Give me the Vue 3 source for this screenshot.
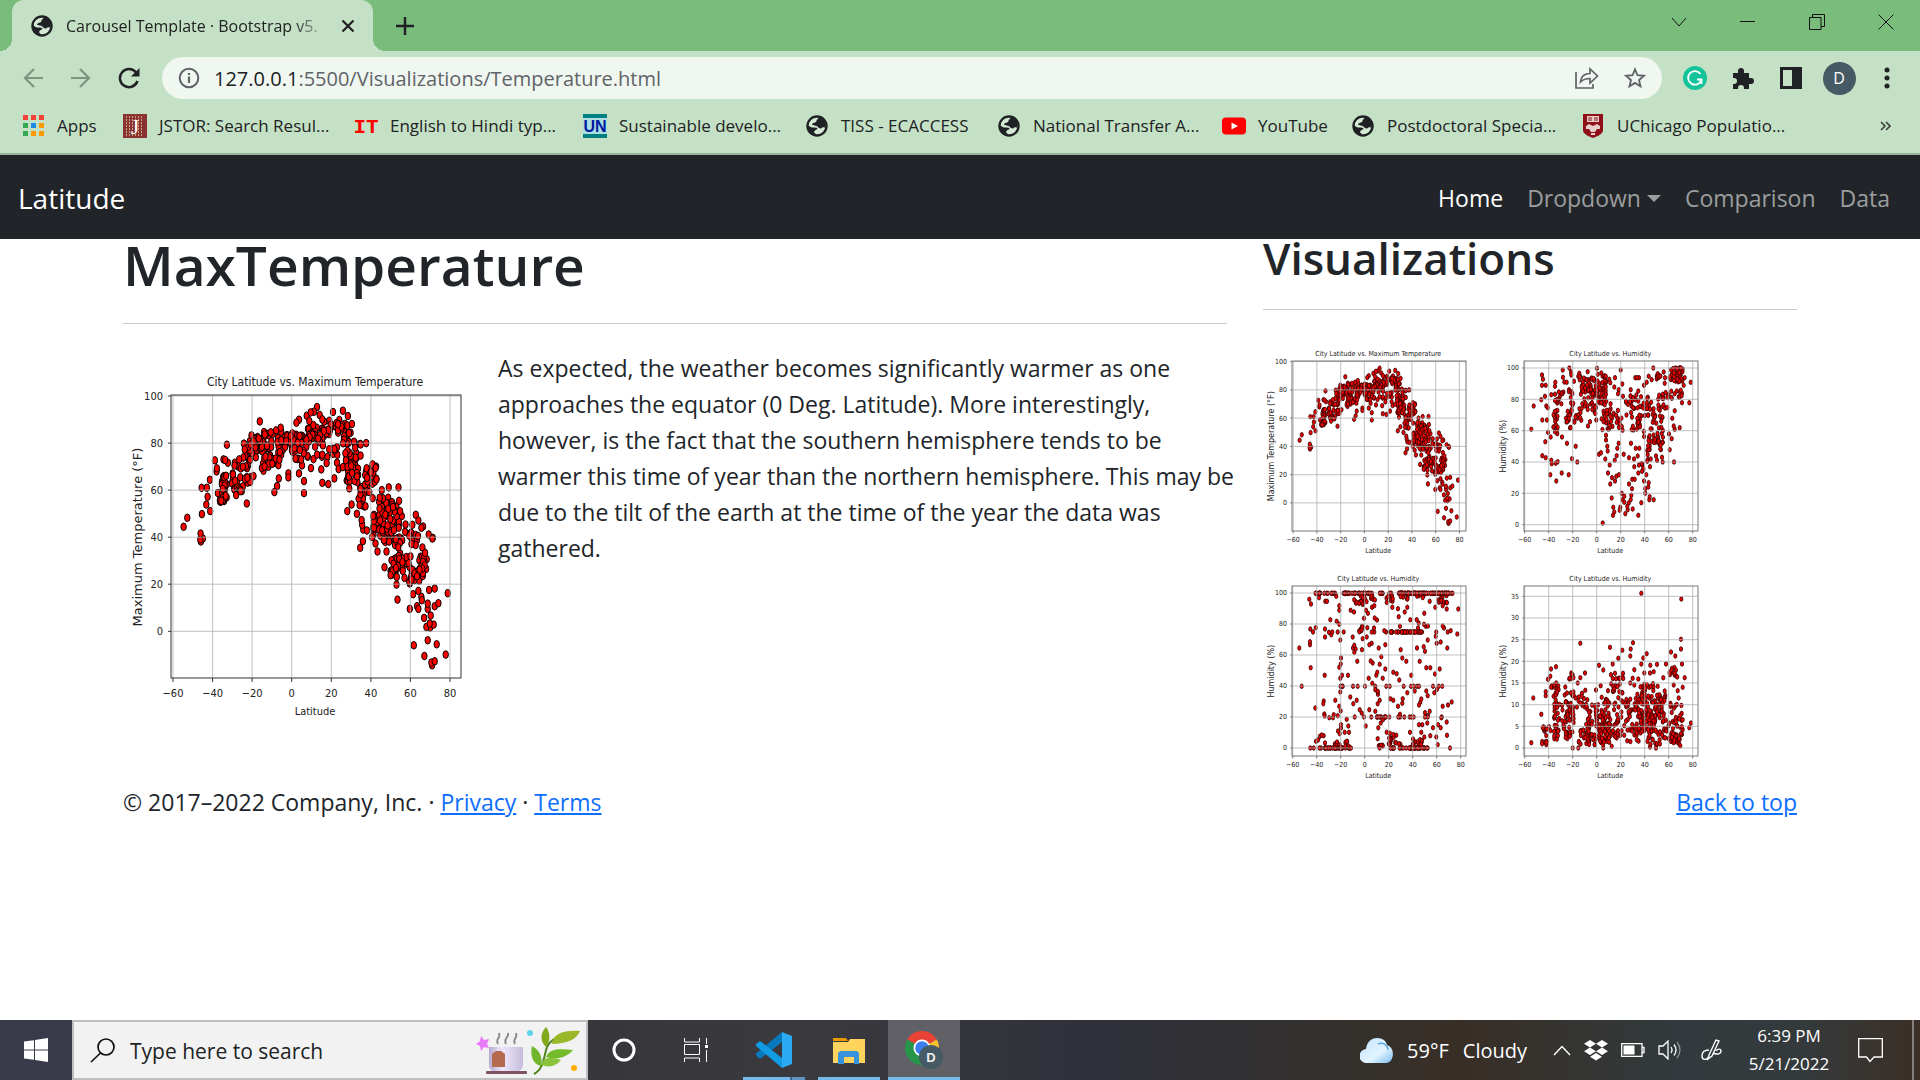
<script setup>
import { h } from 'vue'

const bookmarks = [
  { label: 'Apps', icon: 'apps', width: 42 },
  { label: 'JSTOR: Search Resul...', icon: 'jstor', width: 171 },
  { label: 'English to Hindi typ...', icon: 'it', width: 169 },
  { label: 'Sustainable develo...', icon: 'un', width: 162 },
  { label: 'TISS - ECACCESS', icon: 'globe', width: 132 },
  { label: 'National Transfer A...', icon: 'globe', width: 165 },
  { label: 'YouTube', icon: 'youtube', width: 69 },
  { label: 'Postdoctoral Specia...', icon: 'globe', width: 170 },
  { label: 'UChicago Populatio...', icon: 'chicago', width: 171 }
]

const appColors = ['#f44336', '#f44336', '#f44336', '#34a853', '#1e88e5', '#fb9a00', '#34a853', '#fb9a00', '#fb9a00']

// Scatter sources: `frame` is the extent of the plot area, `points` are x y pairs
// in that extent, `fill` lists dense patches as [x0, x1, y0, y1, count].
const temperature = {
  title: 'City Latitude vs. Maximum Temperature',
  yLabel: 'Maximum Temperature (°F)',
  frame: [182, 495, 1054, 1343],
  xTicks: [188, 119, 8],
  yTicks: [1203, 141, 20, 6],
  points: `220 890 231 863 271 910 270 928 272 934 278 925 275 852 300 843 288 823 292 800 290 773 274 773 299 749
  314 691 320 715 319 724 350 644 340 688 353 698 345 690 449 574 410 820 493 786 501 768 506 745 535 730 535 742
  567 730 582 753 582 789 576 706 603 714 634 718 637 758 655 762 673 745 636 680 650 699 681 698 686 717 699 711
  718 775 725 823 712 843 746 806 749 825 764 829 741 851 755 870 757 884 760 898 771 901 759 933 751 953 787 921
  790 858 797 940 803 964 800 748 769 639 788 703 795 710 816 780 837 772 866 772 868 812 824 1011 830 964 857 843
  863 1108 900 1136 860 1063 861 1040 884 1043 879 1022 918 854 926 871 940 889 935 893 908 884 957 913 968 925
  969 923 886 905 876 858 887 883 865 940 868 922 938 952 946 968 951 987 949 1016 910 1092 926 1136 922 1128
  926 1082 935 1100 936 1110 958 1079 975 1075 1014 1089 986 1119 975 1128 954 1120 954 1136 943 1163 963 1156
  950 1190 961 1192 972 1183 960 1180 912 1245 954 1230 981 1242 944 1277 1008 1273 975 1293 967 1305 965 1297
  621 531 612 545 602 547 590 557 567 569 559 578 669 546 699 542 714 558 726 582 722 608 629 555 637 568 643 575
  598 573 610 585 658 572 688 570 694 590 512 593 498 601 488 611 464 613 424 616 447 629 433 625 460 722 475 710
  323 789 330 790 378 795 395 783 430 738 420 755 374 698 387 688`,
  fill: [[328, 350, 787, 815, 14], [333, 352, 733, 780, 14], [360, 400, 730, 785, 16], [402, 424, 735, 765, 8],
    [370, 420, 680, 715, 10], [400, 440, 640, 690, 14], [418, 465, 618, 665, 18], [455, 515, 605, 715, 42],
    [515, 560, 605, 670, 26], [550, 600, 615, 690, 24], [590, 660, 590, 640, 32], [605, 658, 640, 690, 8],
    [660, 720, 575, 640, 26], [668, 685, 635, 675, 6], [705, 756, 635, 700, 20], [710, 745, 700, 762, 24],
    [765, 800, 705, 790, 24], [750, 776, 760, 840, 8], [788, 850, 800, 920, 66], [845, 872, 830, 900, 10],
    [820, 880, 925, 958, 12], [842, 866, 985, 1035, 18], [860, 908, 970, 1010, 18], [898, 930, 1010, 1060, 18],
    [928, 947, 975, 1040, 16], [895, 925, 905, 948, 9]]
}

const humidity = {
  title: 'City Latitude vs. Humidity',
  yLabel: 'Humidity (%)',
  frame: [101, 394, 623, 904],
  xTicks: [103, 72, 8],
  yTicks: [885, 94, 20, 6],
  points: `155 436 158 449 155 467 166 467 153 510 164 500 130 529 123 599 156 571 170 571 168 529 172 534 173 608
  181 622 165 636 156 678 166 684 183 692 184 702 196 701 202 696 180 735 198 754 214 730 235 735 230 641 256 650
  245 687 261 697 215 622 201 612 217 421 218 443 222 457 229 458 237 415 242 427 243 436 251 455 264 440 267 431
  292 426 320 416 322 434 333 430 342 438 391 421 374 444 357 449 360 459 372 472 396 463 385 480 383 492 398 500
  421 480 435 444 446 444 440 444 419 516 436 510 444 484 489 415 475 440 469 458 461 467 484 450 502 432 506 443
  520 427 524 444 523 461 293 589 299 576 318 571 347 617 347 631 351 650 352 664 326 674 332 669 345 688 358 706
  353 730 365 744 374 754 360 763 378 740 386 735 385 641 381 656 379 678 373 692 400 674 416 684 422 641 436 656
  447 656 431 688 442 679 432 711 446 706 444 730 426 749 433 749 416 763 425 777 394 791 364 805 402 800 423 797
  421 810 397 810 402 818 415 820 369 833 372 847 368 857 390 833 388 842 411 830 412 840 405 852 427 838 337 880
  444 857 453 819 461 754 475 759 474 772 465 777 465 791 478 801 477 810 490 810 468 735 459 716 455 725 481 688
  479 711 497 679 500 692 515 683 517 697 538 660 551 697 536 613 544 627 550 589 553 599 568 594 546 566 553 543
  575 519 597 519 601 458 580 467 583 444 571 482 195 458 194 470 183 495`,
  fill: [[188, 205, 540, 612, 16], [193, 220, 485, 525, 14], [225, 275, 535, 595, 24], [235, 250, 480, 545, 9],
    [267, 320, 440, 508, 48], [320, 348, 435, 520, 34], [275, 320, 518, 552, 14], [333, 368, 520, 600, 30],
    [370, 400, 540, 605, 12], [407, 450, 495, 600, 22], [422, 450, 560, 605, 12], [450, 495, 500, 560, 22],
    [480, 518, 555, 640, 30], [495, 540, 480, 545, 18], [537, 577, 412, 458, 40], [542, 575, 480, 515, 10],
    [465, 480, 635, 700, 8], [455, 480, 600, 640, 5], [500, 520, 605, 668, 8], [450, 460, 690, 730, 4], [498, 512, 428, 450, 6]]
}

const row = (y, xs) => xs.split(' ').map(x => `${x} ${y}`).join(' ')

const cloudiness = {
  title: 'City Latitude vs. Humidity',
  yLabel: 'Humidity (%)',
  frame: [125, 79, 647, 589],
  xTicks: [127, 72, 8],
  yTicks: [565, 93, 20, 6],
  points: `177 119 182 133 180 208 188 217 196 204 179 246 179 255 147 265 181 324 154 380 195 445 206 114 225 125
  230 125 258 110 267 138 267 152 240 180 259 185 267 194 224 208 224 232 236 218 243 225 246 217 262 217 280 217
  270 241 301 152 311 157 272 295 271 313 267 323 270 356 275 347 293 347 223 347 270 397 255 422 220 424 219 432
  300 412 319 422 309 432 267 440 271 454 222 463 223 469 237 474 250 465 262 468 248 474 328 450 334 460 346 499
  289 479 294 499 272 495 272 505 263 514 268 522 283 518 296 518 214 526 209 530 203 541 197 545 220 528 224 550
  321 305 307 232 327 213 335 200 351 204 337 237 349 232 347 152 353 161 341 176 365 143 372 138 373 175 380 181
  357 255 364 251 385 265 405 255 335 270 312 257 308 265 316 268 312 278 361 304 367 310 393 291 388 314 405 328
  381 338 378 347 397 356 355 356 429 338 439 342 447 361 451 270 456 295 468 305 508 305 483 347 528 324 540 324
  568 328 554 343 524 275 520 261 500 265 532 241 571 247 591 265 621 223 601 213 592 217 577 199 581 205 558 217
  556 230 559 251 521 194 526 200 533 199 505 190 503 205 499 180 480 180 445 171 449 200 522 161 463 157 471 143
  443 147 426 143 538 125 555 143 589 148 624 148 577 138 402 213 407 217 372 217 364 217 371 205 366 371 375 380
  375 390 382 395 383 404 382 397 388 422 382 432 357 450 375 455 420 417 429 422 457 417 456 431 471 399 493 394
  443 440 449 464 528 394 532 408 513 418 510 428 506 436 524 459 538 455 533 468 552 399 560 389 577 440 593 436
  604 427 589 487 573 474 563 495 571 504 548 504 531 490 506 495 516 495 513 518 479 518 558 532 562 555 590 527
  599 565 522 532 540 528 509 540 384 504 398 480 391 490 409 518 382 537 438 527 488 538 180 565 190 565 `
    + row(380, '308 322 344 408 418 460 482 490 500 506 548 565 576') + ' '
    + row(472, '313 341 363 417 444 449 462 478 484 490 524 532 574'),
  fill: [[190, 265, 101, 101, 18], [278, 397, 101, 101, 40], [417, 426, 101, 101, 3], [443, 608, 101, 101, 90],
    [207, 312, 565, 565, 32], [417, 543, 565, 565, 36], [385, 410, 555, 565, 7], [418, 515, 217, 217, 34],
    [267, 278, 380, 380, 4], [380, 408, 472, 472, 8], [307, 350, 108, 135, 16], [350, 380, 108, 122, 6],
    [400, 430, 108, 130, 8], [450, 480, 105, 118, 5], [500, 525, 105, 115, 4], [563, 592, 105, 136, 14],
    [250, 268, 545, 560, 6], [283, 296, 545, 562, 6], [410, 435, 520, 558, 14], [487, 515, 543, 562, 12],
    [435, 453, 548, 562, 4], [332, 342, 200, 215, 3], [325, 335, 208, 218, 3]]
}

const wind = {
  title: 'City Latitude vs. Humidity',
  yLabel: 'Humidity (%)',
  frame: [101, 79, 623, 589],
  xTicks: [103, 72, 8],
  yTicks: [565, 65, 5, 8],
  points: `453 101 573 118 572 239 572 268 270 251 428 249 359 263 396 272 421 268 420 289 469 282 459 295 384 296
  367 313 339 331 326 317 284 340 197 321 182 328 180 350 173 359 542 277 555 289 575 313 583 354 527 313 500 314
  480 317 453 313 490 336 432 330 519 354 129 415 123 549 153 464 166 396 166 408 602 490 597 504 577 383 550 376
  502 380 462 340 479 340 362 345 374 341 398 341 331 378 317 391 247 565 264 565 339 565 364 560 497 565 570 558
  479 562 225 382 275 401 198 370 243 340 270 354 262 370 237 358 285 392 256 415 353 393 420 370 444 358 432 376
  427 356 561 352 562 393 523 394 565 415 291 420 230 400 577 480 577 510`,
  fill: [[153, 170, 500, 555, 14], [170, 183, 500, 515, 3], [182, 205, 370, 415, 12], [190, 205, 400, 540, 24],
    [205, 250, 405, 490, 28], [237, 250, 345, 365, 6], [217, 250, 490, 538, 16], [250, 285, 410, 450, 9],
    [240, 252, 385, 480, 9], [262, 300, 505, 555, 22], [285, 328, 430, 555, 42], [330, 358, 410, 470, 16],
    [325, 360, 465, 555, 60], [358, 400, 350, 400, 18], [360, 405, 410, 550, 30], [405, 450, 400, 500, 36],
    [405, 450, 500, 548, 18], [450, 490, 367, 430, 26], [450, 530, 430, 520, 88], [490, 525, 400, 430, 14],
    [468, 525, 520, 560, 16], [532, 575, 430, 500, 24], [535, 577, 500, 553, 30], [537, 560, 322, 352, 10]]
}

function buildChart(source, size, seed) {
  const k = size / 375
  const [fx0, fy0, fx1, fy1] = source.frame
  const left = Math.round(48 * k)
  const top = Math.round(45 * k)
  const width = Math.round(290 * k)
  const height = Math.round(283 * k)
  const sx = x => Math.round((left + (x - fx0) / (fx1 - fx0) * width) * 10) / 10
  const sy = y => Math.round((top + (y - fy0) / (fy1 - fy0) * height) * 10) / 10
  let state = seed
  const random = () => {
    state = (state * 1664525 + 1013904223) % 4294967296
    return state / 4294967296
  }
  const numbers = source.points.trim().split(/\s+/).map(Number)
  const dots = []
  for (let i = 0; i < numbers.length; i += 2) dots.push([sx(numbers[i]), sy(numbers[i + 1])])
  for (const [x0, x1, y0, y1, count] of source.fill) {
    for (let i = 0; i < count; i++) {
      dots.push([sx(x0 + (x1 - x0) * random()), sy(y0 + (y1 - y0) * random())])
    }
  }
  for (let i = dots.length - 1; i > 0; i--) {
    const j = Math.floor(random() * (i + 1))
    ;[dots[i], dots[j]] = [dots[j], dots[i]]
  }
  const [tx, stepX, nx] = source.xTicks
  const [ty, stepY, unit, ny] = source.yTicks
  return {
    title: source.title, yLabel: source.yLabel, size, k, left, top, width, height, dots,
    xs: Array.from({ length: nx }, (_, i) => ({ at: sx(tx + stepX * i), label: String(i * 20 - 60).replace('-', '−') })),
    ys: Array.from({ length: ny }, (_, i) => ({ at: Math.max(top, sy(ty - stepY * i)), label: String(i * unit) }))
  }
}

const ScatterPlot = ({ c }) => {
  const k = c.k
  const text = (cls, x, y, anchor, label) => h('text', { class: cls, x, y, 'text-anchor': anchor }, label)
  return h('svg', { class: ['plot', c.size < 300 && 'plot-small'], width: c.size, height: c.size, viewBox: `0 0 ${c.size} ${c.size}` }, [
    h('g', { class: 'plot-dots' }, c.dots.map(([cx, cy]) => h('ellipse', { cx, cy, rx: 2.7 * k, ry: 3.8 * k }))),
    h('g', { class: 'plot-grid' }, [
      ...c.xs.map(t => h('path', { d: `M${t.at} ${c.top}v${c.height}` })),
      ...c.ys.map(t => h('path', { d: `M${c.left} ${t.at}h${c.width}` }))
    ]),
    h('g', { class: 'plot-frame' }, [
      ...c.xs.map(t => h('path', { d: `M${t.at} ${c.top + c.height}v${4 * k}` })),
      ...c.ys.map(t => h('path', { d: `M${c.left} ${t.at}h${-3 * k}` })),
      h('rect', { x: c.left, y: c.top, width: c.width, height: c.height })
    ]),
    ...c.xs.map(t => text('plot-tick', t.at, 347 * k, 'middle', t.label)),
    ...c.ys.map(t => text('plot-tick', 40 * k, t.at + 4 * k, 'end', t.label)),
    text('plot-tick', 192 * k, 365 * k, 'middle', 'Latitude'),
    text('plot-title', 192 * k, 36 * k, 'middle', c.title),
    h('text', { class: 'plot-axis', transform: `translate(${19 * k} ${187 * k}) rotate(-90)`, 'text-anchor': 'middle' }, c.yLabel)
  ])
}
ScatterPlot.props = ['c']

const mainChart = buildChart(temperature, 375, 7)
const thumbs = [
  buildChart(temperature, 225, 7),
  buildChart(humidity, 225, 11),
  buildChart(cloudiness, 225, 23),
  buildChart(wind, 225, 42)
]
</script>

<template>
  <svg class="defs" aria-hidden="true">
    <symbol id="globe" viewBox="0 0 24 24">
      <circle cx="12" cy="12" r="10.4" fill="#d5ead5" stroke="#202124" stroke-width="2.6" />
      <path fill="#202124" d="M2 11l3 2c2 1 4 0 6 1 2 0 2 2 0 2-2 1-3 3-1 4l1 2.500C5 22 1 17 2 11zM14 1.800c4 1 7 4 8 8l-1.500 4c-2-1-3 0-4 1-3 0-4-3-6-3-2-1-3-1-4-1 0-2 3-3 4-3 2-1 0-3 2-3 1-1 1-2 1.500-3z" />
    </symbol>
  </svg>
  <div class="screen">
    <header class="browser">
      <div class="tabs">
        <div class="tab">
          <svg class="i22"><use href="#globe" /></svg>
          <span class="tab-title">Carousel Template · Bootstrap v5.</span>
          <button class="plain tab-close" aria-label="Close tab">
            <svg width="14" height="14" viewBox="0 0 14 14"><path d="M1.500 1.500l11 11M12.500 1.500l-11 11" stroke="#202124" stroke-width="2.200" /></svg>
          </button>
        </div>
        <button class="plain new-tab" aria-label="New tab">
          <svg width="18" height="18" viewBox="0 0 18 18"><path d="M9 0v18M0 9h18" stroke="#202124" stroke-width="2.500" /></svg>
        </button>
        <div class="window-buttons">
          <button class="plain" aria-label="Search tabs"><svg width="16" height="10" viewBox="0 0 16 10"><path d="M1 1l7 8 7-8" fill="none" stroke="#111" /></svg></button>
          <button class="plain" aria-label="Minimize"><svg width="15" height="2"><path d="M0 .5h15" stroke="#111" /></svg></button>
          <button class="plain" aria-label="Restore"><svg width="16" height="16" viewBox="0 0 16 16"><path d="M.5 3.500h11.500v12H.5zM3.500 3.500v-3h12v12h-3.500" fill="none" stroke="#111" /></svg></button>
          <button class="plain" aria-label="Close"><svg width="16" height="16" viewBox="0 0 16 16"><path d="M.5.500l15 15M15.500.500l-15 15" stroke="#111" /></svg></button>
        </div>
      </div>

      <div class="toolbar">
        <button class="plain tool" aria-label="Back"><svg width="20" height="20" viewBox="0 0 20 20"><path d="M20 10H2M11 1l-9 9 9 9" fill="none" stroke="#7f947f" stroke-width="2.200" /></svg></button>
        <button class="plain tool" aria-label="Forward"><svg width="20" height="20" viewBox="0 0 20 20"><path d="M0 10h18M9 1l9 9-9 9" fill="none" stroke="#7f947f" stroke-width="2.200" /></svg></button>
        <button class="plain tool" aria-label="Reload"><svg width="22" height="22" viewBox="0 0 22 22"><path d="M19.500 14a9 9 0 1 1-1.500-8.500" fill="none" stroke="#202124" stroke-width="2.500" /><path d="M21.500 1v8.500H13z" fill="#202124" /></svg></button>
        <div class="omnibox">
          <svg width="22" height="22" viewBox="0 0 22 22"><circle cx="11" cy="11" r="9.300" fill="none" stroke="#5f6368" stroke-width="2" /><path d="M11 9.500V16M11 6v2" stroke="#5f6368" stroke-width="2.200" /></svg>
          <span class="url"><b>127.0.0.1</b>:5500/Visualizations/Temperature.html</span>
          <button class="plain tool" aria-label="Share"><svg width="24" height="22" viewBox="0 0 24 22"><path d="M1 5v16h17v-4M5.500 15c.5-5.500 4-8.500 9.500-8.500V2l7.500 7-7.500 7v-4.500c-4 0-7 1-9.500 3.500z" fill="none" stroke="#5f6368" stroke-width="1.700" /></svg></button>
          <button class="plain tool" aria-label="Bookmark"><svg width="22" height="22" viewBox="0 0 24 24"><path d="M12 2.500l2.700 6.500 7 .6-5.300 4.600 1.600 6.900L12 17.400l-6 3.700 1.600-6.900-5.300-4.600 7-.6z" fill="none" stroke="#5f6368" stroke-width="2" /></svg></button>
        </div>
        <button class="plain tool" aria-label="Grammarly"><svg width="24" height="24" viewBox="0 0 24 24"><circle cx="12" cy="12" r="12" fill="#15c39a" /><path d="M17.500 8a6.800 6.800 0 1 0 1 5.500h-4.500M18.500 13.500V18" fill="none" stroke="#fff" stroke-width="1.800" /></svg></button>
        <button class="plain tool" aria-label="Extensions"><svg width="22" height="22" viewBox="0 0 22 22"><path fill="#202124" d="M1 6h5V4a3 3 0 0 1 6 0v2h5v5h2a3 3 0 0 1 0 6h-2v5h-5v-1a3 3 0 0 0-6 0v1H1v-5h1a3 3 0 0 0 0-6H1z" /></svg></button>
        <button class="plain tool" aria-label="Side panel"><svg width="22" height="22" viewBox="0 0 22 22"><path fill="#202124" fill-rule="evenodd" d="M0 0h22v22H0zM3 3v16h9V3z" /></svg></button>
        <button class="plain tool" aria-label="Profile"><span class="avatar">D</span></button>
        <button class="plain tool" aria-label="Menu"><svg width="6" height="22" viewBox="0 0 6 22" fill="#202124"><circle cx="3" cy="3" r="2.500" /><circle cx="3" cy="11" r="2.500" /><circle cx="3" cy="19" r="2.500" /></svg></button>
      </div>

      <nav class="bookmarks" aria-label="Bookmarks">
        <a v-for="b in bookmarks" :key="b.label" href="#" class="bookmark">
          <svg class="mark" viewBox="0 0 24 24">
            <template v-if="b.icon === 'apps'">
              <rect v-for="(c, i) in appColors" :key="i" :x="(i % 3) * 8 + 2" :y="Math.floor(i / 3) * 8 + 1" width="5" height="5" :fill="c" />
            </template>
            <template v-else-if="b.icon === 'jstor'">
              <path fill="#8a3432" d="M0 0h24v24H0z" /><path fill="none" stroke="#c9a183" stroke-width="2" stroke-dasharray="1 2" d="M3 3h18M3 6h18M3 9h18M3 12h18M3 15h18M3 18h18M3 21h18" />
              <text x="12" y="20" class="serif" font-size="22" text-anchor="middle" fill="#fff">J</text>
            </template>
            <text v-else-if="b.icon === 'it'" x="12" y="19" class="mono" font-size="21" text-anchor="middle" fill="#f00">IT</text>
            <template v-else-if="b.icon === 'un'">
              <path fill="#a9dfe0" d="M0 0h24v24H0z" /><path fill="#008080" d="M0 0h24v4H0zM0 20h24v4H0z" />
              <text x="12" y="18" class="bold" font-size="16" text-anchor="middle" fill="#0018a0">UN</text>
            </template>
            <template v-else-if="b.icon === 'youtube'"><rect y="3.500" width="24" height="17" rx="4" fill="#f00" /><path d="M9.500 8.500v7l6.500-3.500z" fill="#fff" /></template>
            <template v-else-if="b.icon === 'chicago'">
              <path fill="#8f1018" d="M2 0h20v16c0 4-5 6-10 8-5-2-10-4-10-8z" /><path fill="#e8cfcb" d="M6 2h12v6H6zM5 12l3-2 4 2 4-2 3 2v3h-3l-2 3h-4l-2-3H5zM10 19h4v2h-4z" />
              <path stroke="#8f1018" d="M7 4h4M13 4h4M7 6h4M13 6h4" />
            </template>
            <use v-else href="#globe" x="1" y="1" width="22" height="22" />
          </svg>
          <span :style="{ width: b.width + 'px' }">{{ b.label }}</span>
        </a>
        <button class="plain more" aria-label="More bookmarks"><svg width="11" height="10" viewBox="0 0 11 10"><path d="M1 1l4 4-4 4M6 1l4 4-4 4" fill="none" stroke="#3c403d" stroke-width="1.600" /></svg></button>
      </nav>
    </header>

    <nav class="navbar">
      <a href="#" class="brand">Latitude</a>
      <div class="links">
        <a href="#" class="active">Home</a>
        <a href="#">Dropdown<i class="caret"></i></a>
        <a href="#">Comparison</a>
        <a href="#">Data</a>
      </div>
    </nav>

    <main class="page">
      <div class="columns">
        <section>
          <h1>MaxTemperature</h1>
          <hr>
          <div class="story-body">
            <ScatterPlot :c="mainChart" />
            <p>As expected, the weather becomes significantly warmer as one approaches the equator (0 Deg. Latitude). More interestingly, however, is the fact that the southern hemisphere tends to be warmer this time of year than the northern hemisphere. This may be due to the tilt of the earth at the time of the year the data was gathered.</p>
          </div>
        </section>
        <aside>
          <h2>Visualizations</h2>
          <hr>
          <div class="thumbs">
            <a v-for="(c, i) in thumbs" :key="i" href="#"><ScatterPlot :c="c" /></a>
          </div>
        </aside>
      </div>
      <footer class="foot">
        <p>© 2017–2022 Company, Inc. · <a href="#">Privacy</a> · <a href="#">Terms</a></p>
        <a href="#">Back to top</a>
      </footer>
    </main>

    <footer class="taskbar">
      <button class="plain cell" aria-label="Start"><svg width="24" height="24" viewBox="0 0 24 24" fill="#fff"><path d="M0 3.500l10-1.300V11.500H0zM11 2l13-2v11.500H11zM0 12.500h10v9.300L0 20.500zM11 12.500h13V24l-13-2z" /></svg></button>
      <label class="search">
        <svg width="25" height="25" viewBox="0 0 25 25"><circle cx="16" cy="9" r="8" fill="none" stroke="#111" stroke-width="1.700" /><path d="M10.500 15L1 24" stroke="#111" stroke-width="1.700" /></svg>
        <input type="text" placeholder="Type here to search" aria-label="Search">
        <svg width="106" height="50" viewBox="0 0 106 50">
          <path d="M5 11l3 4 5-1-2 5 2 4-5-1-3 4-1-5-4-2 4-3z" fill="#e879f9" />
          <path d="M22 19c-3-6 3-5 1-11M30 19c-3-6 3-5 2-11M39 19c-3-6 3-5 1-11" fill="none" stroke="#8b8b8f" stroke-width="2" />
          <path d="M13 22h34v18c0 4-4 7-8 7H21c-5 0-8-3-8-7z" fill="url(#cup)" />
          <path d="M22 21v7" stroke="#eee" /><path d="M16 29l4-3h5l4 3v13H16z" fill="#b5694d" />
          <rect x="10" y="46" width="41" height="3" rx="1" fill="#7d5062" />
          <circle cx="54" cy="8" r="3" fill="#5dd5ea" /><circle cx="98" cy="43" r="3" fill="#ffae00" />
          <path d="M58 49c10-5 10-19 13-27 3-7 10-11 24-14" fill="none" stroke="#4c841b" stroke-width="2" />
          <path d="M70 22c-7-6-5-15 0-20 4 5 5 13 0 20z" fill="#82a91c" /><path d="M76 19c1-10 11-14 28-13-3 8-13 13-28 13z" fill="#9bb72a" />
          <path d="M65 41c-9-2-11-12-9-20 8 4 11 12 9 20z" fill="#70b52b" /><path d="M70 32c4-9 14-8 27-7-7 8-16 10-27 7z" fill="#73bb28" /><path d="M65 40c3-9 11-8 20-5-5 6-11 8-20 5z" fill="#8bc43c" />
          <defs><linearGradient id="cup" x1="0" x2="1"><stop stop-color="#b8aace" /><stop offset=".4" stop-color="#eee8fb" /><stop offset="1" stop-color="#c5bbda" /></linearGradient></defs>
        </svg>
      </label>
      <button class="plain cell" aria-label="Cortana"><svg width="24" height="24"><circle cx="12" cy="12" r="10" fill="none" stroke="#fff" stroke-width="3" /></svg></button>
      <button class="plain cell" aria-label="Task view"><svg width="24" height="24" viewBox="0 0 24 24" fill="none" stroke="#fff"><path d="M.5 0v4h15V0M.5 6.500h15v10H.5zM.5 24v-4h15v4M22.500 0v6M22.500 12v12" /><path d="M21 7h3v3h-3z" fill="#fff" stroke="none" /></svg></button>
      <div class="apps">
        <button class="plain cell run split" aria-label="Visual Studio Code"><svg width="36" height="36" viewBox="0 0 36 36"><path d="M4 27l-4-3.500v-2L26 0v10z" fill="#0878bd" /><path d="M0 12l4-3 22 17v10L0 14z" fill="#119be4" /><path d="M26 0l10 4v28l-10 4z" fill="#2aaaf4" /></svg></button>
        <button class="plain cell run" aria-label="File Explorer"><svg width="32" height="27" viewBox="0 0 32 27"><path d="M0 1h13l2 3H0z" fill="#e69a00" /><path d="M0 5h15l2-3h15v24H0z" fill="#ffd45c" /><path d="M5 27V16l2-2h17l2 2v11h-5v-7H11v7z" fill="#3794dc" /></svg></button>
        <button class="plain cell run current" aria-label="Google Chrome">
          <svg width="38" height="38" viewBox="0 0 38 38"><path d="M17 17L2.300 8.500A17 17 0 0 1 31.700 8.500z" fill="#ea4335" /><path d="M17 17L2.300 8.500A17 17 0 0 0 17 34z" fill="#27964b" /><path d="M17 17l14.700-8.500A17 17 0 0 1 17 34z" fill="#fbc02d" /><circle cx="17" cy="17" r="8.500" fill="#fff" /><circle cx="17" cy="17" r="6.800" fill="#3c7df0" /><circle cx="26" cy="26" r="12" fill="#455a64" /><text x="26" y="31" class="bold" font-size="13" text-anchor="middle" fill="#eee">D</text></svg>
        </button>
      </div>
      <div class="weather">
        <svg width="33" height="25" viewBox="0 0 33 25"><path d="M7 25a7 7 0 0 1-1-14C7 4 11 0 17 0c6 0 9 3 10 7 9 3 7 18-1 18z" fill="url(#sky)" /><path d="M18 6c5-2 10 1 10 6" fill="none" stroke="#5aa9e8" stroke-width="1.500" /><defs><linearGradient id="sky" x2="1" y2="1"><stop stop-color="#bfe4fd" /><stop offset=".6" stop-color="#e2f4ff" /><stop offset="1" stop-color="#7bbcf0" /></linearGradient></defs></svg>
        <span>59°F</span><span>Cloudy</span>
      </div>
      <div class="tray">
        <button class="plain" aria-label="Show hidden icons"><svg width="18" height="11" viewBox="0 0 18 11"><path d="M1 10l8-8.500L17 10" fill="none" stroke="#fff" stroke-width="1.400" /></svg></button>
        <button class="plain" aria-label="Dropbox"><svg width="24" height="21" viewBox="0 0 24 21" fill="#fff"><path d="M6 0l6 3.700-6 3.800L0 3.700zM18 0l6 3.700-6 3.800-6-3.800zM6 7.500l6 3.800L6 15l-6-3.700zM18 7.500l6 3.800-6 3.700-6-3.700zM12 13l6 3.700-6 3.800-6-3.800z" /></svg></button>
        <button class="plain" aria-label="Battery"><svg width="24" height="14" viewBox="0 0 24 14"><path d="M.7.700h20.300v12.600H.7zM21.500 4.500H23v5h-1.500" fill="none" stroke="#fff" stroke-width="1.300" /><path d="M2.500 2.500h11v9h-11z" fill="#fff" /></svg></button>
        <button class="plain" aria-label="Volume"><svg width="24" height="20" viewBox="0 0 24 20" fill="none" stroke="#fff" stroke-width="1.300"><path d="M1 6h4l5-5v18l-5-5H1zM13 7q2 3 0 6M16 4.500q4 5.500 0 11" /><path d="M19 2q6 8 0 16" opacity=".45" /></svg></button>
        <button class="plain" aria-label="Pen"><svg width="22" height="22" viewBox="0 0 22 22" fill="none" stroke="#fff" stroke-width="1.400"><path d="M8 16L15 1l3 1-7 15-4 3zM8 11c-4 0-7 2-7 6s5 5 7 0M12 14c4 2 8 1 8-2s-4-2-5 0" /></svg></button>
      </div>
      <div class="clock"><span>6:39 PM</span><span>5/21/2022</span></div>
      <button class="plain note" aria-label="Notifications"><svg width="25" height="25" viewBox="0 0 25 25"><path d="M.7.700h23.600v18.300H16L12 23.500 8.500 19H.7z" fill="none" stroke="#fff" stroke-width="1.300" /></svg></button>
    </footer>
  </div>
</template>

<style>
body { margin: 0; background: #fff; }
.plot { display: block; flex: none; font-family: "DejaVu Sans Condensed", "DejaVu Sans", sans-serif; font-stretch: condensed; fill: #222; }
.plot-dots { fill: #f00; stroke: #000; stroke-width: 1; }
.plot-small .plot-dots { fill: #f00000; stroke: #300; stroke-width: .8; }
.plot-grid { stroke: #b0b0b0; stroke-opacity: .8; fill: none; }
.plot-frame { stroke: #333; fill: none; }
.plot-small .plot-frame { stroke: #777; }
.plot-title { font-size: 12px; }
.plot-tick { font-size: 11px; }
.plot-axis { font-family: "DejaVu Sans", sans-serif; font-stretch: normal; font-size: 13px; }
.plot-small .plot-title, .plot-small .plot-tick { font-size: 7px; }
.plot-small .plot-axis { font-size: 8px; }
</style>

<style scoped>
* { box-sizing: border-box; }
.defs { position: absolute; width: 0; height: 0; }
.screen { min-height: 100vh; display: flex; flex-direction: column; font-family: "Open Sans", "Noto Sans", sans-serif; color: #212529; }
.plain { border: 0; padding: 0; background: none; display: flex; align-items: center; justify-content: center; font: inherit; }
.serif { font-family: "Liberation Serif", serif; }
.mono { font-family: "Liberation Mono", monospace; font-weight: 700; }
.bold { font-family: "Liberation Sans", sans-serif; font-weight: 700; }
svg { flex: none; display: block; }
.i22 { width: 22px; height: 22px; }

.browser { background: #c5e1c5; border-bottom: 2px solid #9bb49c; color: #202124; }
.tabs { height: 51px; background: #7abc7c; display: flex; align-items: center; padding-left: 12px; }
.tab { position: relative; width: 361px; height: 51px; display: flex; align-items: center; padding: 0 18px 0 19px; background: #c5e1c5; border-radius: 12px 12px 0 0; }
.tab::before, .tab::after { content: ""; position: absolute; bottom: 0; width: 12px; height: 12px; }
.tab::before { left: -12px; background: radial-gradient(circle at 0 0, #7abc7c 12px, #c5e1c5 12px); }
.tab::after { right: -12px; background: radial-gradient(circle at 100% 0, #7abc7c 12px, #c5e1c5 12px); }
.tab-title { flex: 1; margin-left: 13px; white-space: nowrap; overflow: hidden; font-size: 16px; mask-image: linear-gradient(90deg, #000 86%, transparent); }
.tab-close { margin-left: 12px; }
.new-tab { width: 64px; height: 50px; }
.window-buttons { margin-left: auto; display: flex; align-self: flex-start; }
.window-buttons button { width: 69px; height: 43px; }
.toolbar { height: 54px; display: flex; align-items: center; padding: 0 9px; }
.tool { width: 48px; height: 42px; }
.omnibox { flex: 1; height: 42px; margin: 0 9px; border-radius: 21px; background: #f0f7f0; display: flex; align-items: center; padding: 0 3px 0 16px; }
.url { flex: 1; margin-left: 14px; font-size: 20px; color: #5f6368; white-space: nowrap; }
.url b { font-weight: 400; color: #202124; }
.avatar { width: 33px; height: 33px; border-radius: 50%; background: #455a64; color: #fff; font-size: 16px; line-height: 33px; text-align: center; }
.bookmarks { height: 48px; display: flex; align-items: center; gap: 24px; padding: 0 29px 6px 21px; }
.bookmark { display: flex; align-items: center; gap: 12px; color: #202124; text-decoration: none; font-size: 17px; line-height: 24px; white-space: nowrap; }
.mark { width: 24px; height: 24px; }
.more { margin-left: auto; }

.navbar { position: relative; z-index: 2; height: 84px; background: #212529; display: flex; align-items: center; justify-content: space-between; padding: 2px 18px 0; }
.navbar a { text-decoration: none; color: #9b9d9e; }
.navbar .brand { font-size: 28px; color: #fff; }
.links { display: flex; font-size: 23px; }
.links a { padding: 0 12px; display: flex; align-items: center; }
.navbar .active { color: #fff; }
.caret { margin-left: 6px; border: 7px solid transparent; border-top-color: currentColor; border-bottom: 0; }

.page { margin: -12px 123px 0; font-size: 23px; line-height: 36px; }
.columns { display: grid; grid-template-columns: minmax(0, 1104fr) minmax(0, 534fr); column-gap: 36px; }
h1, h2 { margin: 0; font-weight: 600; }
h1 { padding-top: 4px; font-size: 55px; line-height: 68px; }
h2 { padding-top: 4px; font-size: 44px; line-height: 54px; }
hr { margin: 24px 0; border: 0; border-top: 1px solid #c8c9ca; }
.story-body { display: flex; padding-top: 2px; }
.story-body p { flex: 1; margin: 0 -12px 0 0; }
.thumbs { display: flex; flex-wrap: wrap; column-gap: 7px; }
.foot { display: flex; justify-content: space-between; }
.foot p { margin: 0; }
a { color: #0d6efd; }

.taskbar { height: 60px; margin-top: auto; display: flex; align-items: center; color: #fff; background: linear-gradient(90deg, #383a4a 0, #383a4a 72px, #37373b 588px, #3a3a3e 800px, #2f303a 1100px, #35312d 1360px, #382e26 1460px, #323a3d 1680px, #343a3c 1800px, #3b2f26); }
.cell { width: 72px; height: 60px; }
.search { width: 516px; height: 60px; border: 2px solid #bfbfbf; background: #f2f2f2; display: flex; align-items: center; padding: 0 4px 0 16px; }
.search input { flex: 1; min-width: 0; margin-left: 15px; padding: 2px 0 0; border: 0; background: none; outline: 0; font: 21px "Open Sans", sans-serif; color: #222; }
.search input::placeholder { color: #222; opacity: 1; }
.apps { display: flex; gap: 3px; margin-left: 6px; }
.run { position: relative; }
.run::after { content: ""; position: absolute; left: 5px; right: 5px; bottom: 0; height: 3px; background: #76b9ed; }
.split::after { background: linear-gradient(90deg, #76b9ed 47px, #3c6c90 47px, #3c6c90 49px, #6095bf 49px); }
.current { background: #606066; }
.current::after { left: 0; right: 0; }
.weather { margin-left: auto; display: flex; align-items: center; gap: 14px; font-size: 20px; }
.tray { display: flex; align-items: center; gap: 13px; margin: 0 9px 0 26px; }
.tray button:last-child { margin-left: 6px; }
.clock { width: 114px; display: flex; flex-direction: column; align-items: center; font-size: 17px; line-height: 28px; }
.note { width: 48px; height: 60px; margin-right: 6px; padding-right: 18px; border-right: 2px solid #85807b; box-sizing: content-box; }
</style>
